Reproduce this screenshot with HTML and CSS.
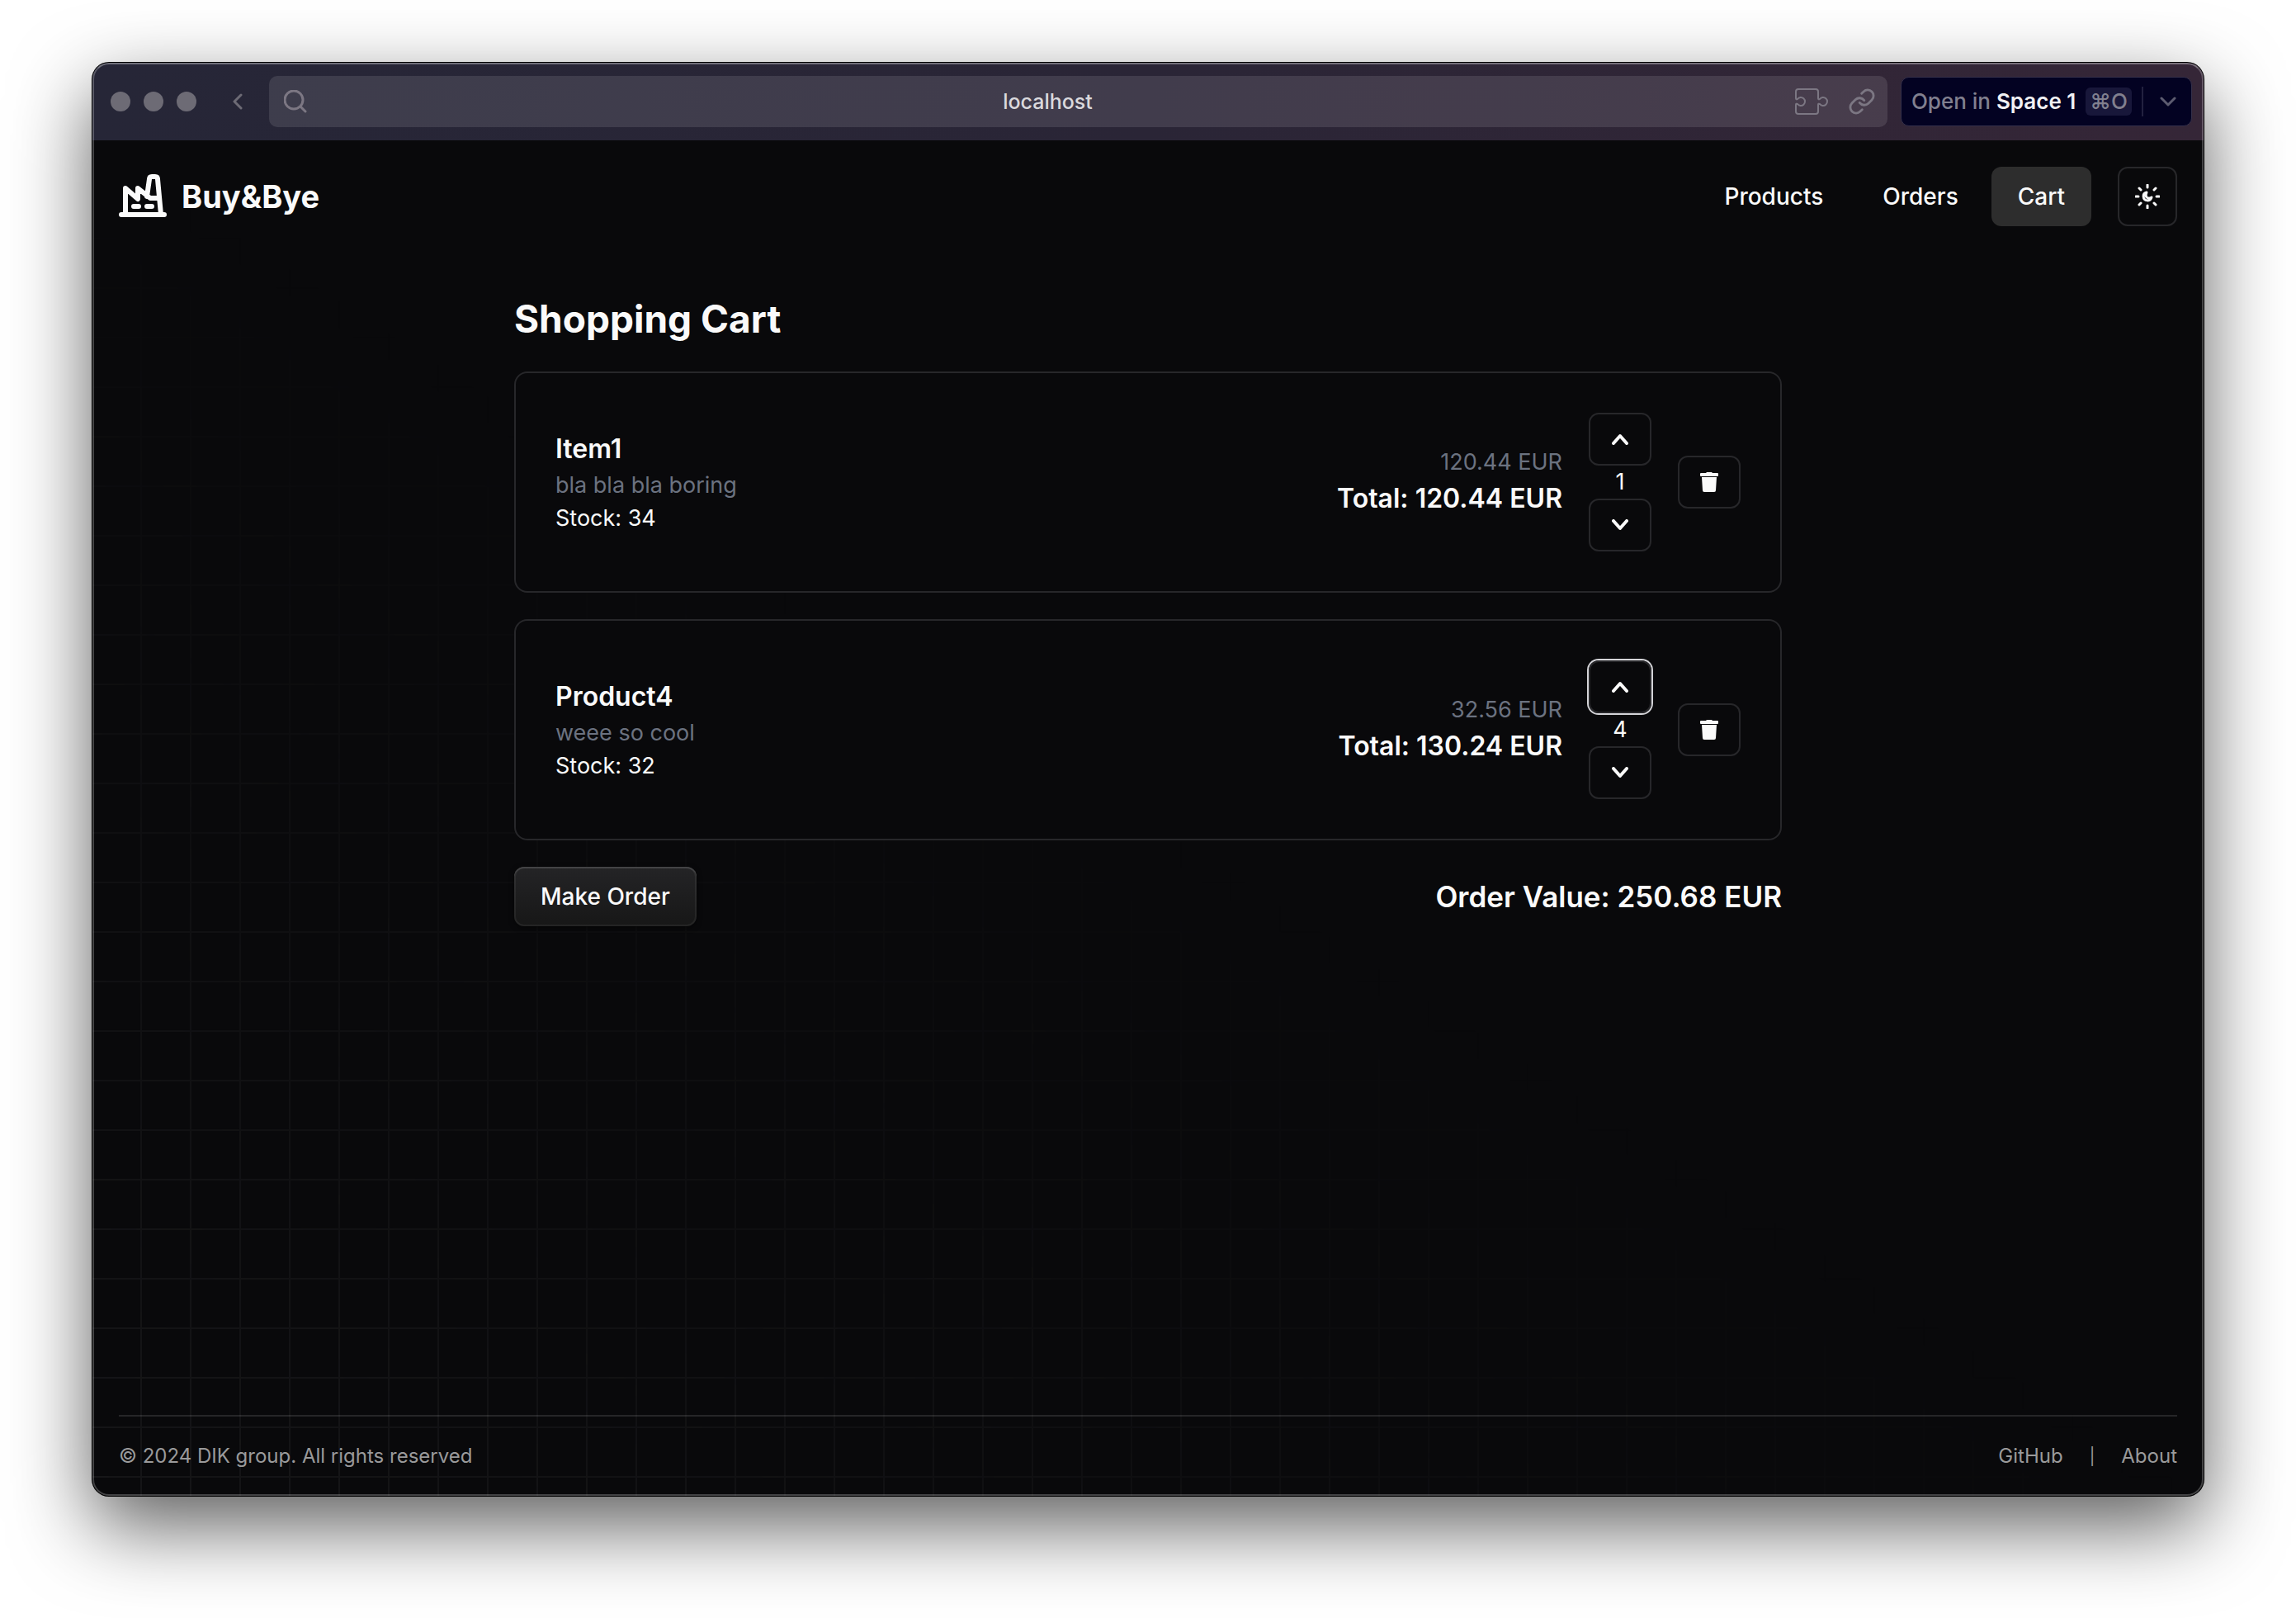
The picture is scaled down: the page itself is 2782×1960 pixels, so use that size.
FILE: index.html
```html
<!DOCTYPE html>
<html lang="en">
<head>
<meta charset="utf-8">
<meta name="viewport" content="width=device-width, initial-scale=1">
<title>Shopping Cart – Buy&amp;Bye</title>
<link rel="stylesheet" href="styles.css">
</head>
<body>
<div class="window">
  <div class="toolbar">
    <div class="lights"><span class="light"></span><span class="light"></span><span class="light"></span></div>
    <button class="back" type="button" aria-label="Back">
      <svg width="12" height="20" viewBox="0 0 12 20"><path d="M10 2 2 10l8 8"/></svg>
    </button>
    <div class="address">
      <svg width="28" height="28" viewBox="0 0 28 28"><circle cx="12" cy="12" r="11"/><path d="m20 20 6 6"/></svg>
      <input class="url" type="text" value="localhost" aria-label="Address" readonly>
      <svg class="thin" width="40" height="32" viewBox="0 0 40 32"><path d="M4 1h21q3 0 3 3v8q0 2 2 1a5 5 0 1 1 0 6q-2-1-2 1v8q0 3-3 3H4q-3 0-3-3v-8q0-2 2-1a5 5 0 1 0 0-6q-2 1-2-1V4q0-3 3-3z"/></svg>
      <svg class="link-icon" width="34" height="34" viewBox="0 0 24 24"><path d="M10 13a5 5 0 0 0 7.54.54l3-3a5 5 0 0 0-7.07-7.07l-1.72 1.71"/><path d="M14 11a5 5 0 0 0-7.54-.54l-3 3a5 5 0 0 0 7.07 7.07l1.71-1.71"/></svg>
    </div>
    <div class="open-in">
      <button class="open-space" type="button"><span>Open in <b>Space 1</b></span><kbd>⌘O</kbd></button>
      <button class="open-more" type="button" aria-label="Choose space">
        <svg width="20" height="12" viewBox="0 0 20 12"><path d="m2 2 8 8 8-8"/></svg>
      </button>
    </div>
  </div>

  <div class="page">
    <header class="header">
      <a class="brand" href="#">
        <svg width="58" height="54" viewBox="0 0 58 54"><path d="M3 49h52M8 49V17l15 13V17l15 12h11M34 27l3-21q0-3 3-3h4q3 0 3 3l4 43M18 39h6M34 39h6"/></svg>
        <span>Buy&amp;Bye</span>
      </a>
      <nav class="nav">
        <a class="nav-link" href="#">Products</a>
        <a class="nav-link" href="#">Orders</a>
        <a class="nav-link active" href="#" aria-current="page">Cart</a>
      </nav>
      <button class="icon-button theme" type="button" aria-label="Toggle theme">
        <svg width="30" height="30" viewBox="0 0 30 30"><path d="M15 1v3M15 26v3M1 15h3M26 15h3M5 5l2 2M23 23l2 2M25 5l-2 2M7 23l-2 2"/><path d="M14 10a5 5 0 1 0 6 6q-4 2-6 0-2-2 0-6z"/></svg>
      </button>
    </header>

    <main class="main">
      <h1 class="title">Shopping Cart</h1>
      <ul class="items">
        <li class="card">
          <div class="info">
            <h2 class="name">Item1</h2>
            <p class="muted">bla bla bla boring</p>
            <p>Stock: 34</p>
          </div>
          <div class="price">
            <p class="muted">120.44 EUR</p>
            <p class="total">Total: 120.44 EUR</p>
          </div>
          <div class="quantity">
            <button class="icon-button" type="button" aria-label="Increase quantity"><svg width="20" height="14" viewBox="0 0 20 14"><path d="m2 12 8-9 8 9"/></svg></button>
            <span>1</span>
            <button class="icon-button" type="button" aria-label="Decrease quantity"><svg width="20" height="14" viewBox="0 0 20 14"><path d="m2 2 8 9 8-9"/></svg></button>
          </div>
          <button class="icon-button" type="button" aria-label="Remove Item1"><svg class="solid" width="22" height="24" viewBox="0 0 22 24"><path d="M8 0h6l1 1h6q1 0 1 1v2q0 1-1 1H1Q0 5 0 4V2q0-1 1-1h6zM2 6h18l-1 16q0 2-2 2H5q-2 0-2-2z"/></svg></button>
        </li>
        <li class="card">
          <div class="info">
            <h2 class="name">Product4</h2>
            <p class="muted">weee so cool</p>
            <p>Stock: 32</p>
          </div>
          <div class="price">
            <p class="muted">32.56 EUR</p>
            <p class="total">Total: 130.24 EUR</p>
          </div>
          <div class="quantity">
            <button class="icon-button focused" type="button" aria-label="Increase quantity"><svg width="20" height="14" viewBox="0 0 20 14"><path d="m2 12 8-9 8 9"/></svg></button>
            <span>4</span>
            <button class="icon-button" type="button" aria-label="Decrease quantity"><svg width="20" height="14" viewBox="0 0 20 14"><path d="m2 2 8 9 8-9"/></svg></button>
          </div>
          <button class="icon-button" type="button" aria-label="Remove Product4"><svg class="solid" width="22" height="24" viewBox="0 0 22 24"><path d="M8 0h6l1 1h6q1 0 1 1v2q0 1-1 1H1Q0 5 0 4V2q0-1 1-1h6zM2 6h18l-1 16q0 2-2 2H5q-2 0-2-2z"/></svg></button>
        </li>
      </ul>
      <div class="summary">
        <button class="make-order" type="button">Make Order</button>
        <p class="order-value">Order Value: 250.68 EUR</p>
      </div>
    </main>

    <footer class="footer">
      <p>© 2024 DIK group. All rights reserved</p>
      <div class="footer-links"><a href="#">GitHub</a><span class="divider">|</span><a href="#">About</a></div>
    </footer>
  </div>
</div>
</body>
</html>
```
FILE: styles.css
```css
*, *::before, *::after { box-sizing: border-box; }

html { height: 100%; }

body {
  margin: 0;
  min-height: 100%;
  display: flex;
  padding: 76px 112px 148px;
  background: #fff;
  color: #fafafa;
  font-family: Inter, "Liberation Sans", sans-serif;
  font-size: 27px;
  line-height: 40px;
}

h1, h2, p, ul { margin: 0; padding: 0; }
a { color: inherit; text-decoration: none; }
button, input { font: inherit; color: inherit; margin: 0; padding: 0; border: 0; background: none; }
svg { display: block; flex: none; fill: none; stroke: currentColor; stroke-width: 3; stroke-linecap: round; stroke-linejoin: round; }

/* Browser window */
.window {
  position: relative;
  flex: 1;
  display: flex;
  flex-direction: column;
  border-radius: 20px;
  overflow: hidden;
  background: #09090b;
  box-shadow: 0 0 0 1px #000, 0 36px 96px rgba(0, 0, 0, .64);
}

.window::after {
  content: "";
  position: absolute;
  inset: 0;
  border: 2px solid rgba(255, 255, 255, .24);
  border-top-color: rgba(255, 255, 255, .34);
  border-radius: 20px;
  pointer-events: none;
}

.toolbar {
  display: flex;
  align-items: center;
  height: 94px;
  padding: 0 14px 0 22px;
  background: linear-gradient(90deg, #262637, #2a2536 50%, #352637);
}

.lights { display: flex; gap: 16px; }
.light { width: 24px; height: 24px; border-radius: 50%; background: #6d6b75; }
.back { margin: 0 32px 0 44px; color: #6d6b75; }

.address {
  flex: 1;
  display: flex;
  align-items: center;
  gap: 24px;
  height: 62px;
  margin-right: 16px;
  padding: 0 14px 0 18px;
  border-radius: 10px;
  background: rgba(255, 255, 255, .11);
  color: #7c7783;
}
.address .thin { stroke-width: 2; }
.address .link-icon { stroke-width: 2; }

.url { flex: 1; min-width: 0; padding-right: 8px; text-align: center; font-size: 25px; font-weight: 500; color: #dad9dd; }

.open-in {
  display: flex;
  align-items: center;
  height: 60px;
  padding: 0 18px 0 12px;
  border: 1px solid #34304a;
  border-radius: 10px;
  background: #030222;
  color: #81808f;
  font-size: 26px;
  font-weight: 500;
}

.open-space { display: flex; align-items: center; gap: 12px; }
.open-space b { font-weight: 600; color: #f1f1f4; }
.open-space kbd { padding: 0 5px; border-radius: 6px; background: #18173a; font: inherit; line-height: 34px; }
.open-more { margin-left: 12px; padding: 12px 0 12px 20px; border-left: 2px solid #22213f; color: #5d5c70; }

/* Site */
.page {
  position: relative;
  z-index: 0;
  flex: 1;
  display: flex;
  flex-direction: column;
  padding: 0 32px;
}

.page::before {
  content: "";
  position: absolute;
  z-index: -1;
  inset: 0;
  background:
    linear-gradient(to right, transparent 58px, #161618 58px) 0 0 / 60px 60px,
    linear-gradient(to bottom, transparent 58px, #161618 58px) 0 0 / 60px 60px;
  -webkit-mask-image: linear-gradient(to top right, #000, transparent 50%);
  mask-image: linear-gradient(to top right, #000, transparent 50%);
}

.header { display: flex; align-items: center; gap: 32px; padding: 32px 0; }
.brand { display: flex; align-items: center; gap: 18px; margin-right: auto; font-size: 38px; font-weight: 700; line-height: 56px; }
.brand svg { stroke-width: 6; }
.nav { display: flex; gap: 8px; }
.nav-link { padding: 16px 32px; border-radius: 12px; font-size: 28px; font-weight: 500; }
.nav-link.active { background: #2d2d2d; }

.icon-button {
  display: flex;
  align-items: center;
  justify-content: center;
  width: 76px;
  height: 64px;
  border: 2px solid #27272a;
  border-radius: 12px;
}
.icon-button svg { stroke-width: 4; }
.icon-button .solid { fill: currentColor; stroke: none; }
.icon-button.theme { width: 72px; height: 72px; }
.icon-button.theme svg { stroke-width: 3; }
.icon-button.focused { box-shadow: 0 0 0 2px #d4d4d8; }

.main { flex: 1; width: 100%; max-width: 1536px; margin: 0 auto; padding: 48px 0; }
.title { margin-bottom: 32px; font-size: 46px; font-weight: 700; line-height: 64px; }
.items { display: grid; gap: 32px; list-style: none; }

.card {
  display: flex;
  align-items: center;
  gap: 32px;
  padding: 48px;
  border: 2px solid #27272a;
  border-radius: 16px;
  background: #09090b;
}
.info { flex: 1; }
.name { font-size: 32px; font-weight: 600; line-height: 48px; }
.muted { color: #6b7280; }
.price { text-align: right; }
.total { font-size: 32px; font-weight: 600; line-height: 48px; }
.quantity { display: flex; flex-direction: column; align-items: center; }

.summary { display: flex; align-items: center; justify-content: space-between; margin-top: 32px; }
.make-order {
  height: 72px;
  padding: 0 32px;
  border-radius: 12px;
  background: linear-gradient(#242426, #171717);
  box-shadow: inset 0 2px #434345, inset 0 0 0 2px rgba(255, 255, 255, .06), 0 2px 6px rgba(0, 0, 0, .5);
  font-size: 28px;
  font-weight: 500;
}
.order-value { font-size: 35px; font-weight: 600; line-height: 56px; }

.footer {
  display: flex;
  justify-content: space-between;
  padding: 32px 0;
  border-top: 2px solid rgba(255, 255, 255, .12);
  color: #9a9a9b;
  font-size: 24px;
  line-height: 32px;
}
.footer-links { display: flex; gap: 32px; }
.divider { font-size: 20px; }
```
